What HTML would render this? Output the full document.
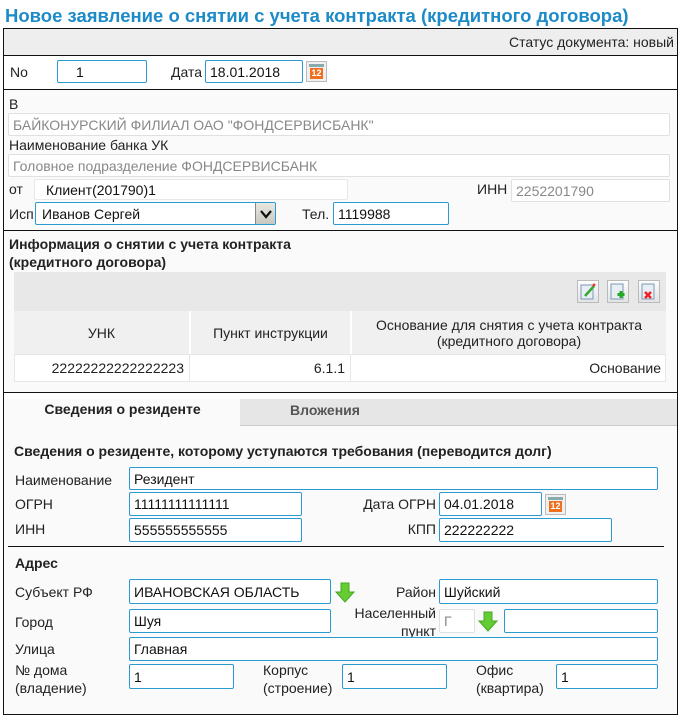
<!DOCTYPE html>
<html><head><meta charset="utf-8"><style>
*{margin:0;padding:0;box-sizing:border-box}
body{width:680px;height:717px;background:#fff;font-family:"Liberation Sans",Arial,sans-serif;font-size:14px;color:#222;position:relative;overflow:hidden}
div,span{position:absolute}
.t{white-space:nowrap;line-height:16px}
.b{font-weight:bold}
.i,.r{display:flex;align-items:center;border:1px solid #2b9ad1;border-radius:2px;background:#fff;padding-left:4px;white-space:nowrap;overflow:hidden;color:#111}
.r{border-color:#e0e0e0;color:#888}
.ln{background:#111;height:1px}
.cal{width:21px;height:21px;border:1px solid #bbb;background:#f0f0f0}
.cal:before{content:"";position:absolute;left:2px;top:2px;width:15px;height:3px;background:#8aa}
.cal:after{content:"12";position:absolute;left:3px;top:6px;width:13px;height:11px;background:#f07020;color:#fff;font-size:9px;font-weight:bold;line-height:11px;text-align:center}
.btn{width:22px;height:23px;border:1px solid #bbb;background:linear-gradient(#fdfdfd,#e3e3e3)}
</style></head><body>
<div class="t b" style="left:5px;top:5px;font-size:18.5px;line-height:21px;color:#1d8bc8">Новое заявление о снятии с учета контракта (кредитного договора)</div>
<div style="left:3px;top:28px;width:675px;height:687px;border:1px solid #111;background:#fafafa"></div>
<div style="left:4px;top:29px;width:673px;height:26px;background:#eee"></div>
<div class="t" style="right:6px;top:34px">Статус документа: новый</div>
<div class="ln" style="left:4px;top:55px;width:673px"></div>
<div style="left:4px;top:56px;width:673px;height:33px;background:#fff"></div>
<div class="t" style="left:10px;top:64px">No</div>
<div class="i" style="left:57px;top:60px;width:90px;height:23px;padding-left:18px">1</div>
<div class="t" style="left:171px;top:64px">Дата</div>
<div class="i" style="left:205px;top:60px;width:98px;height:23px">18.01.2018</div>
<div class="cal" style="left:306px;top:61px"></div>
<div class="ln" style="left:4px;top:89px;width:673px"></div>
<div class="t" style="left:9px;top:96px">В</div>
<div class="r" style="left:8px;top:113px;width:662px;height:23px">БАЙКОНУРСКИЙ ФИЛИАЛ ОАО "ФОНДСЕРВИСБАНК"</div>
<div class="t" style="left:9px;top:137px">Наименование банка УК</div>
<div class="r" style="left:8px;top:154px;width:662px;height:23px">Головное подразделение ФОНДСЕРВИСБАНК</div>
<div class="t" style="left:9px;top:181px">от</div>
<div class="r" style="left:34px;top:179px;width:314px;height:21px;color:#111;padding-left:11px;border-color:#e8e8e8">Клиент(201790)1</div>
<div class="t" style="left:477px;top:181px">ИНН</div>
<div class="r" style="left:511px;top:179px;width:159px;height:23px">2252201790</div>
<div class="t" style="left:9px;top:206px">Исп.</div>
<div class="i" style="left:35px;top:202px;width:241px;height:23px;padding-left:6px">Иванов Сергей</div>
<div style="left:255px;top:203px;width:20px;height:21px;background:linear-gradient(#e8e8e0,#c8c8c0);border-left:1px solid #888"><svg width="20" height="21"><path d="M5 8l5 6 5-6" fill="none" stroke="#111" stroke-width="2.2"/></svg></div>
<div class="t" style="left:302px;top:206px">Тел.</div>
<div class="i" style="left:333px;top:202px;width:116px;height:23px">1119988</div>
<div class="ln" style="left:4px;top:230px;width:673px"></div>
<div class="t b" style="left:9px;top:235px;line-height:18px">Информация о снятии с учета контракта<br>(кредитного договора)</div>
<div style="left:14px;top:272px;width:652px;height:39px;background:#e8e8e8"></div>
<div class="btn" style="left:577px;top:280px"><svg width="20" height="21"><rect x="3" y="4" width="12" height="14" fill="#e8eef4" stroke="#7a9ab8"/><path d="M7 15l9-10" stroke="#3a3" stroke-width="2.5"/><path d="M15 5l2-2" stroke="#e33" stroke-width="2.5"/></svg></div>
<div class="btn" style="left:607px;top:280px"><svg width="20" height="21"><rect x="3" y="3" width="12" height="15" fill="#e8eef4" stroke="#7a9ab8"/><path d="M13 10v7M9.5 13.5h7" stroke="#2a2" stroke-width="3"/></svg></div>
<div class="btn" style="left:638px;top:280px"><svg width="20" height="21"><rect x="3" y="3" width="12" height="15" fill="#e8eef4" stroke="#7a9ab8"/><path d="M6 11l6 6M12 11l-6 6" stroke="#e22" stroke-width="2.5"/></svg></div>
<div style="left:14px;top:311px;width:652px;height:43px;background:#f0f0f0"></div>
<div style="left:189px;top:311px;width:2px;height:43px;background:#fff"></div>
<div style="left:350px;top:311px;width:2px;height:43px;background:#fff"></div>
<div class="t" style="left:14px;top:325px;width:175px;text-align:center">УНК</div>
<div class="t" style="left:191px;top:325px;width:159px;text-align:center">Пункт инструкции</div>
<div class="t" style="left:352px;top:317px;width:314px;text-align:center">Основание для снятия с учета контракта<br>(кредитного договора)</div>
<div style="left:14px;top:354px;width:652px;height:28px;background:#fff;border:1px solid #e6e6e6"></div>
<div style="left:189px;top:355px;width:1px;height:26px;background:#e6e6e6"></div>
<div style="left:350px;top:355px;width:1px;height:26px;background:#e6e6e6"></div>
<div class="t" style="left:14px;top:360px;width:170px;text-align:right">22222222222222223</div>
<div class="t" style="left:191px;top:360px;width:154px;text-align:right">6.1.1</div>
<div class="t" style="left:352px;top:360px;width:309px;text-align:right">Основание</div>
<div class="ln" style="left:4px;top:392px;width:673px"></div>
<div style="left:4px;top:393px;width:673px;height:6px;background:#fff"></div>
<div style="left:240px;top:399px;width:437px;height:27px;background:#e6e6e6;border-bottom:1px solid #ccc"></div>
<div style="left:5px;top:399px;width:235px;height:28px;background:#fafafa"></div>
<div class="t b" style="left:5px;top:401px;width:235px;text-align:center">Сведения о резиденте</div>
<div class="t b" style="left:290px;top:402px;color:#555">Вложения</div>
<div class="t b" style="left:14px;top:443px">Сведения о резиденте, которому уступаются требования (переводится долг)</div>
<div class="t" style="left:15px;top:472px">Наименование</div>
<div class="i" style="left:129px;top:467px;width:529px;height:23px">Резидент</div>
<div class="t" style="left:15px;top:496px">ОГРН</div>
<div class="i" style="left:129px;top:492px;width:173px;height:24px">11111111111111</div>
<div class="t" style="left:300px;top:496px;width:136px;text-align:right">Дата ОГРН</div>
<div class="i" style="left:439px;top:492px;width:103px;height:24px">04.01.2018</div>
<div class="cal" style="left:545px;top:494px"></div>
<div class="t" style="left:15px;top:521px">ИНН</div>
<div class="i" style="left:129px;top:518px;width:173px;height:24px">555555555555</div>
<div class="t" style="left:300px;top:521px;width:136px;text-align:right">КПП</div>
<div class="i" style="left:439px;top:518px;width:173px;height:24px">222222222</div>
<div class="ln" style="left:8px;top:546px;width:656px"></div>
<div class="t b" style="left:15px;top:555px">Адрес</div>
<div class="t" style="left:15px;top:584px">Субъект РФ</div>
<div class="i" style="left:129px;top:579px;width:202px;height:25px">ИВАНОВСКАЯ ОБЛАСТЬ</div>
<div style="left:334px;top:581px"><svg width="24" height="22"><path d="M7 2h8v9h5l-9 10-9-10h5z" fill="#6c3" stroke="#4a2" stroke-width="1"/></svg></div>
<div class="t" style="left:300px;top:584px;width:136px;text-align:right">Район</div>
<div class="i" style="left:439px;top:579px;width:219px;height:25px">Шуйский</div>
<div class="t" style="left:15px;top:614px">Город</div>
<div class="i" style="left:129px;top:609px;width:202px;height:24px">Шуя</div>
<div class="t" style="left:300px;top:604px;width:136px;text-align:right;line-height:18px">Населенный<br>пункт</div>
<div class="r" style="left:439px;top:609px;width:36px;height:24px">Г</div>
<div style="left:477px;top:610px"><svg width="24" height="22"><path d="M7 2h8v9h5l-9 10-9-10h5z" fill="#6c3" stroke="#4a2" stroke-width="1"/></svg></div>
<div class="i" style="left:504px;top:609px;width:154px;height:24px"></div>
<div class="t" style="left:15px;top:641px">Улица</div>
<div class="i" style="left:129px;top:637px;width:529px;height:24px">Главная</div>
<div class="t" style="left:15px;top:661px;line-height:18px">№ дома<br>(владение)</div>
<div class="i" style="left:129px;top:664px;width:105px;height:25px">1</div>
<div class="t" style="left:263px;top:661px;line-height:18px">Корпус<br>(строение)</div>
<div class="i" style="left:342px;top:664px;width:105px;height:25px">1</div>
<div class="t" style="left:476px;top:661px;line-height:18px">Офис<br>(квартира)</div>
<div class="i" style="left:556px;top:664px;width:102px;height:25px">1</div>
</body></html>
